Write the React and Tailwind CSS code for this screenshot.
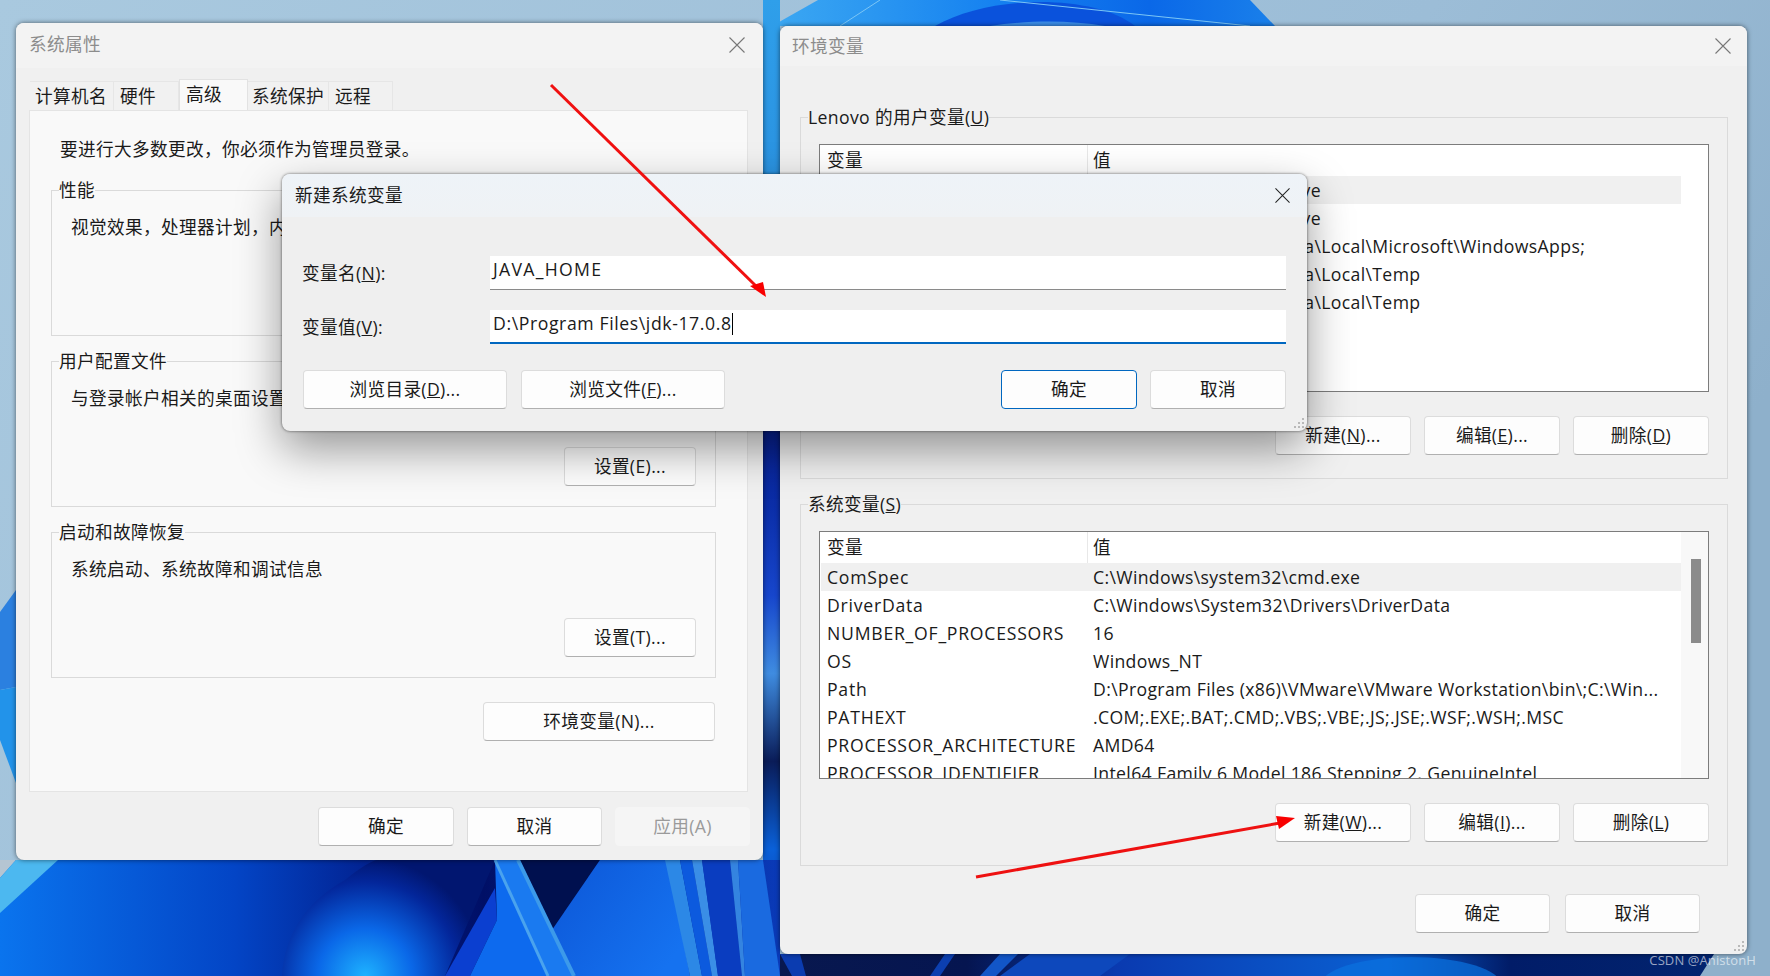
import React from "react";

const FONT = "font-['Open_Sans','Noto_Sans_CJK_SC',sans-serif]";

function Close({ className }) {
  return (
    <svg viewBox="0 0 16 16" className={className} fill="none" stroke="currentColor" strokeWidth="1.1">
      <path d="M0.5 0.5 L15.5 15.5 M15.5 0.5 L0.5 15.5" />
    </svg>
  );
}

function Grip({ className }) {
  return (
    <svg viewBox="0 0 12 12" className={className} fill="#b9b9b9">
      <rect x="8" y="0" width="2" height="2" />
      <rect x="4" y="4" width="2" height="2" />
      <rect x="8" y="4" width="2" height="2" />
      <rect x="0" y="8" width="2" height="2" />
      <rect x="4" y="8" width="2" height="2" />
      <rect x="8" y="8" width="2" height="2" />
    </svg>
  );
}

function Btn({ className = "", children, primary, disabled }) {
  const base = primary
    ? "border-[#0067c0] bg-[#fdfdfd] text-[#1a1a1a]"
    : disabled
    ? "border-[#f5f5f5] bg-[#f5f5f5] text-[#9a9a9a]"
    : "border-[#dcdcdc] border-b-[#b0b0b0] bg-[#fdfdfd] text-[#1a1a1a]";
  return (
    <div className={`flex h-[39px] shrink-0 items-center justify-center rounded-[4px] border ${base} ${className}`}>
      <span>{children}</span>
    </div>
  );
}

function Group({ title, className = "", children }) {
  return (
    <fieldset className={`border border-[#dadada] ${className}`}>
      <legend className="ml-[7px] h-[24px] leading-[24px] text-[#1a1a1a]">{title}</legend>
      {children}
    </fieldset>
  );
}

function SysGroup({ title, text, btn }) {
  return (
    <Group title={title} className="h-[158px] w-[665px]">
      <div className="flex h-[133px] flex-col justify-between pt-[13px] pr-[19px] pb-[20px] pl-[19px]">
        <p className="h-[24px] leading-[24px] whitespace-nowrap text-[#1a1a1a]">{text}</p>
        <Btn className="w-[132px] self-end">{btn}</Btn>
      </div>
    </Group>
  );
}

function Tab({ w, active, pl, children }) {
  return active ? (
    <div className={`-mb-px h-[32px] shrink-0 border-x border-t border-[#e2e2e2] bg-[#f9f9f9] leading-[28px] ${w} ${pl}`}>{children}</div>
  ) : (
    <div className={`h-[29px] shrink-0 border-t border-r border-[#e6e6e6] bg-[#f1f1f1] leading-[28px] ${w} ${pl}`}>{children}</div>
  );
}

function Rows({ rows }) {
  return (
    <>
      {rows.map((r, i) => (
        <div key={i} className={`flex h-[28px] shrink-0 items-center whitespace-nowrap ${i === 0 ? "bg-[#f0f0f0]" : ""}`}>
          <div className="w-[267px] shrink-0 overflow-hidden pl-[6px] tracking-[0.75px]">{r[0]}</div>
          <div className="min-w-0 flex-1 overflow-hidden pl-[5px]">{r[1]}</div>
        </div>
      ))}
    </>
  );
}

function VarList({ rows, scroll }) {
  return (
    <div className="flex h-[248px] w-[890px] overflow-hidden border border-[#7c7c7c] bg-white text-[#1a1a1a]">
      <div className="flex w-[861px] shrink-0 flex-col pl-px">
        <div className="flex h-[31px] shrink-0 items-center">
          <div className="h-full w-[267px] shrink-0 border-r border-[#e8e8e8] pl-[6px] leading-[31px]">变量</div>
          <div className="pl-[5px]">值</div>
        </div>
        <Rows rows={rows} />
      </div>
      {scroll ? (
        <div className="flex-1 bg-[#f8f8f8] pt-[27px] pl-[10px]">
          <div className="h-[84px] w-[10px] bg-[#8b8b8b]" />
        </div>
      ) : null}
    </div>
  );
}

function Wallpaper() {
  return (
    <svg viewBox="0 0 1770 976" className="absolute inset-0 h-full w-full" preserveAspectRatio="none">
      <defs>
        <linearGradient id="base" x1="0" y1="0" x2="1" y2="0.4">
          <stop offset="0" stopColor="#a9c9df" />
          <stop offset="0.7" stopColor="#9cbdd7" />
          <stop offset="1" stopColor="#8eb0cb" />
        </linearGradient>
        <linearGradient id="bot" x1="0" y1="0" x2="780" y2="0" gradientUnits="userSpaceOnUse">
          <stop offset="0" stopColor="#0a74ee" />
          <stop offset="0.3" stopColor="#0345c6" />
          <stop offset="0.48" stopColor="#02218f" />
          <stop offset="0.62" stopColor="#000f66" />
          <stop offset="1" stopColor="#0a3ab8" />
        </linearGradient>
        <radialGradient id="blob" cx="365" cy="976" r="118" gradientUnits="userSpaceOnUse">
          <stop offset="0" stopColor="#1eb2ff" />
          <stop offset="0.4" stopColor="#0a68e8" />
          <stop offset="0.8" stopColor="#03269a" />
          <stop offset="1" stopColor="#011670" />
        </radialGradient>
        <linearGradient id="fold" x1="500" y1="860" x2="660" y2="976" gradientUnits="userSpaceOnUse">
          <stop offset="0" stopColor="#0a4fd0" />
          <stop offset="1" stopColor="#1572f0" />
        </linearGradient>
        <linearGradient id="dome" x1="772" y1="0" x2="1275" y2="0" gradientUnits="userSpaceOnUse">
          <stop offset="0" stopColor="#3ca8f2" />
          <stop offset="0.45" stopColor="#1581f0" />
          <stop offset="0.75" stopColor="#0a68e8" />
          <stop offset="1" stopColor="#1a80ea" />
        </linearGradient>
        <linearGradient id="br" x1="780" y1="0" x2="1715" y2="0" gradientUnits="userSpaceOnUse">
          <stop offset="0" stopColor="#08184f" />
          <stop offset="0.2" stopColor="#051550" />
          <stop offset="0.36" stopColor="#0a3ab0" />
          <stop offset="0.65" stopColor="#0a60d2" />
          <stop offset="0.78" stopColor="#011c68" />
          <stop offset="1" stopColor="#02246f" />
        </linearGradient>
        <linearGradient id="gap" x1="0" y1="0" x2="0" y2="976" gradientUnits="userSpaceOnUse">
          <stop offset="0" stopColor="#2f9fea" />
          <stop offset="0.18" stopColor="#2a92e0" />
          <stop offset="0.44" stopColor="#07208f" />
          <stop offset="0.52" stopColor="#0b2ea8" />
          <stop offset="0.61" stopColor="#1746cc" />
          <stop offset="0.69" stopColor="#3f8ce0" />
          <stop offset="0.78" stopColor="#0a1c58" />
          <stop offset="0.87" stopColor="#0a60d8" />
          <stop offset="1" stopColor="#0b2a90" />
        </linearGradient>
      </defs>
      <rect width="1770" height="976" fill="url(#base)" />
      <polygon points="772,26 818,0 1250,0 1275,26" fill="url(#dome)" />
      <path d="M935 26 C990 -6 1095 -6 1135 26 Z" fill="#0a52dc" />
      <path d="M990 26 C1030 20 1070 20 1105 26 Z" fill="#3b8eea" />
      <path d="M840 26 L880 0 M1000 0 L1250 26" stroke="#7cc6f5" strokeWidth="1" fill="none" />
      <rect x="763" y="0" width="17" height="976" fill="url(#gap)" />
      <polygon points="0,612 16,590 16,687 0,690" fill="#2b80e0" />
      <polygon points="0,690 16,687 16,783 0,740" fill="#2293ea" />
      <rect x="0" y="860" width="780" height="116" fill="url(#bot)" />
      <polygon points="0,860 16,860 0,878" fill="#b5c5d2" />
      <polygon points="0,878 16,860 58,860 0,913" fill="#4cb8f0" />
      <path d="M282 976 C285 930 310 900 345 880 C360 868 372 860 378 860 L495 860 L445 976 Z" fill="url(#blob)" />
      <polygon points="445,976 495,888 497,920 470,976" fill="#0b3fd0" />
      <polygon points="470,976 497,920 495,860 548,976" fill="#0d6aee" />
      <polygon points="495,860 520,860 575,976 548,976" fill="#1a7af0" />
      <polygon points="520,860 600,860 552,930" fill="#00104f" />
      <polygon points="552,930 600,860 668,860 690,976 575,976" fill="url(#fold)" />
      <path d="M495 860 L548 976" stroke="#4aa3ee" strokeWidth="3" />
      <path d="M518 860 L574 976" stroke="#3c9aea" strokeWidth="4" />
      <polygon points="665,860 680,860 702,976 690,976" fill="#2c88e6" />
      <polygon points="680,860 692,860 712,976 702,976" fill="#0c5ade" />
      <polygon points="692,860 702,860 718,976 712,976" fill="#3a8ee6" />
      <polygon points="702,860 730,860 742,976 718,976" fill="#0a3dc0" />
      <polygon points="730,860 738,860 745,976 742,976" fill="#3484e0" />
      <polygon points="738,860 763,860 780,976 745,976" fill="#1a6ae0" />
      <polygon points="780,954 1714,954 1700,976 780,976" fill="url(#br)" />
      <polygon points="780,954 800,954 806,976 792,976" fill="#0b3cb0" />
      <polygon points="945,954 955,954 940,976 930,976" fill="#0c3fb0" />
      <polygon points="1000,954 1018,954 996,976 980,976" fill="#1256c8" />
      <polygon points="1030,954 1130,954 1100,976 1000,976" fill="#0d48bc" />
      <ellipse cx="1411" cy="985" rx="90" ry="28" fill="#0a72e0" opacity="0.7" />
    </svg>
  );
}

const userRows = [
  ["OneDrive", "C:\\Users\\Lenovo\\OneDrive"],
  ["OneDriveConsumer", "C:\\Users\\Lenovo\\OneDrive"],
  ["Path", "C:\\Users\\Lenovo\\AppData\\Local\\Microsoft\\WindowsApps;"],
  ["TEMP", "C:\\Users\\Lenovo\\AppData\\Local\\Temp"],
  ["TMP", "C:\\Users\\Lenovo\\AppData\\Local\\Temp"],
];

const sysRows = [
  ["ComSpec", "C:\\Windows\\system32\\cmd.exe"],
  ["DriverData", "C:\\Windows\\System32\\Drivers\\DriverData"],
  ["NUMBER_OF_PROCESSORS", "16"],
  ["OS", "Windows_NT"],
  ["Path", "D:\\Program Files (x86)\\VMware\\VMware Workstation\\bin\\;C:\\Win..."],
  ["PATHEXT", ".COM;.EXE;.BAT;.CMD;.VBS;.VBE;.JS;.JSE;.WSF;.WSH;.MSC"],
  ["PROCESSOR_ARCHITECTURE", "AMD64"],
  ["PROCESSOR_IDENTIFIER", "Intel64 Family 6 Model 186 Stepping 2, GenuineIntel"],
];

export default function App() {
  return (
    <div className={`relative h-[976px] w-[1770px] overflow-hidden text-[17.65px] tracking-[0.35px] ${FONT}`}>
      <Wallpaper />

      {/* 系统属性 */}
      <div className="absolute top-[23px] left-[16px] flex h-[837px] w-[747px] flex-col rounded-[8px] bg-[#f0f0f0] shadow-[0_0_5px_rgba(0,0,0,0.55)]">
        <div className="flex h-[45px] shrink-0 items-center justify-between rounded-t-[8px] bg-[#f3f3f3] pr-[18px] pb-[2px] pl-[13px] text-[#8c8c8c]">
          <span>系统属性</span>
          <Close className="h-[16px] w-[16px] text-[#777]" />
        </div>
        <div className="flex h-[42px] items-end pl-[14px] text-[#1a1a1a]">
          <Tab w="w-[84px]" pl="pl-[5px]">计算机名</Tab>
          <Tab w="w-[65px]" pl="pl-[6px]">硬件</Tab>
          <Tab w="w-[69px]" pl="pl-[6px]" active>高级</Tab>
          <Tab w="w-[81px]" pl="pl-[4px]">系统保护</Tab>
          <Tab w="w-[64px]" pl="pl-[6px]">远程</Tab>
        </div>
        <div className="ml-[13px] h-[682px] w-[719px] shrink-0 border border-[#e4e4e4] bg-[#f9f9f9] pt-[26px] pl-[21px]">
          <p className="h-[24px] pl-[9px] leading-[24px] text-[#1a1a1a]">要进行大多数更改，你必须作为管理员登录。</p>
          <div className="mt-[17px] flex flex-col gap-[13px]">
            <SysGroup title="性能" text="视觉效果，处理器计划，内存使用，以及虚拟内存" btn="设置(S)..." />
            <SysGroup title="用户配置文件" text="与登录帐户相关的桌面设置" btn="设置(E)..." />
            <SysGroup title="启动和故障恢复" text="系统启动、系统故障和调试信息" btn="设置(T)..." />
          </div>
          <div className="mt-[24px] flex w-[664px] justify-end">
            <Btn className="w-[232px]">环境变量(N)...</Btn>
          </div>
        </div>
        <div className="flex justify-end gap-[13px] pt-[15px] pr-[13px]">
          <Btn className="w-[136px]">确定</Btn>
          <Btn className="w-[135px]">取消</Btn>
          <Btn className="w-[135px]" disabled>应用(A)</Btn>
        </div>
      </div>

      {/* 环境变量 */}
      <div className="absolute top-[26px] left-[780px] flex h-[928px] w-[967px] flex-col rounded-[8px] bg-[#f0f0f0] shadow-[0_0_5px_rgba(0,0,0,0.55)]">
        <div className="flex h-[40px] shrink-0 items-center justify-between rounded-t-[8px] bg-[#f3f3f3] pr-[16px] pl-[12px] text-[#8c8c8c]">
          <span>环境变量</span>
          <Close className="h-[16px] w-[16px] text-[#777]" />
        </div>
        <div className="mt-[39px] flex flex-col gap-[13px] pl-[20px]">
          <Group title={<>Lenovo 的用户变量(<u>U</u>)</>} className="h-[374px] w-[928px]">
            <div className="pt-[15px] pl-[18px]">
              <VarList rows={userRows} />
              <div className="mt-[24px] flex w-[890px] justify-end gap-[13px]">
                <Btn className="w-[136px]">新建(<u>N</u>)...</Btn>
                <Btn className="w-[136px]">编辑(<u>E</u>)...</Btn>
                <Btn className="w-[136px]">删除(<u>D</u>)</Btn>
              </div>
            </div>
          </Group>
          <Group title={<>系统变量(<u>S</u>)</>} className="h-[374px] w-[928px]">
            <div className="pt-[15px] pl-[18px]">
              <VarList rows={sysRows} scroll />
              <div className="mt-[24px] flex w-[890px] justify-end gap-[13px]">
                <Btn className="w-[136px]">新建(<u>W</u>)...</Btn>
                <Btn className="w-[136px]">编辑(<u>I</u>)...</Btn>
                <Btn className="w-[136px]">删除(<u>L</u>)</Btn>
              </div>
            </div>
          </Group>
        </div>
        <div className="flex justify-end gap-[15px] pt-[28px] pr-[47px]">
          <Btn className="w-[135px]">确定</Btn>
          <Btn className="w-[135px]">取消</Btn>
        </div>
        <Grip className="absolute right-[1px] bottom-[1px] h-[12px] w-[12px]" />
      </div>

      {/* 新建系统变量 */}
      <div className="absolute top-[174px] left-[282px] flex h-[257px] w-[1025px] flex-col rounded-[8px] bg-[#efefef] text-[#1a1a1a] shadow-[0_0_3px_rgba(0,0,0,0.6),0_18px_45px_rgba(0,0,0,0.4)]">
        <div className="flex h-[43px] shrink-0 items-center justify-between rounded-t-[8px] bg-gradient-to-b from-[#eef3f8] to-[#eff2f5] pr-[17px] pl-[13px]">
          <span>新建系统变量</span>
          <Close className="h-[15px] w-[15px] text-[#222]" />
        </div>
        <div className="mt-[39px] flex flex-col gap-[20px] pl-[20px]">
          <div className="flex h-[34px] items-center">
            <div className="w-[188px] pt-[1px]">变量名(<u>N</u>):</div>
            <div className="flex h-[34px] w-[796px] items-center border-b border-[#8a8a8a] bg-white pb-[6px] pl-[3px] tracking-[1.3px]">JAVA_HOME</div>
          </div>
          <div className="flex h-[34px] items-center">
            <div className="w-[188px] pt-[1px]">变量值(<u>V</u>):</div>
            <div className="flex h-[34px] w-[796px] items-center border-b-2 border-[#0067c0] bg-white pb-[5px] pl-[3px] tracking-[0.6px]">
              <span>D:\Program Files\jdk-17.0.8</span>
              <span className="h-[22px] w-px bg-black" />
            </div>
          </div>
        </div>
        <div className="mt-[26px] flex pr-[21px] pl-[21px]">
          <div className="flex gap-[14px]">
            <Btn className="w-[204px]">浏览目录(<u>D</u>)...</Btn>
            <Btn className="w-[204px]">浏览文件(<u>F</u>)...</Btn>
          </div>
          <div className="ml-auto flex gap-[13px]">
            <Btn className="w-[136px]" primary>确定</Btn>
            <Btn className="w-[136px]">取消</Btn>
          </div>
        </div>
        <Grip className="absolute right-[1px] bottom-[1px] h-[12px] w-[12px]" />
      </div>

      {/* 标注箭头 */}
      <svg viewBox="0 0 1770 976" className="pointer-events-none absolute inset-0 h-full w-full">
        <path d="M551 85 L757 287" stroke="#f01010" strokeWidth="3" fill="none" />
        <polygon points="766,297 750,286 763,282" fill="#f80000" />
        <path d="M976 877 L1280 823" stroke="#ee1111" strokeWidth="3" fill="none" />
        <polygon points="1295,818 1276,816 1279,829" fill="#f80000" />
      </svg>

      <div className="absolute top-[951px] right-[14px] text-[13px] tracking-[0.1px] text-white/60">CSDN @AnistonH</div>
    </div>
  );
}
